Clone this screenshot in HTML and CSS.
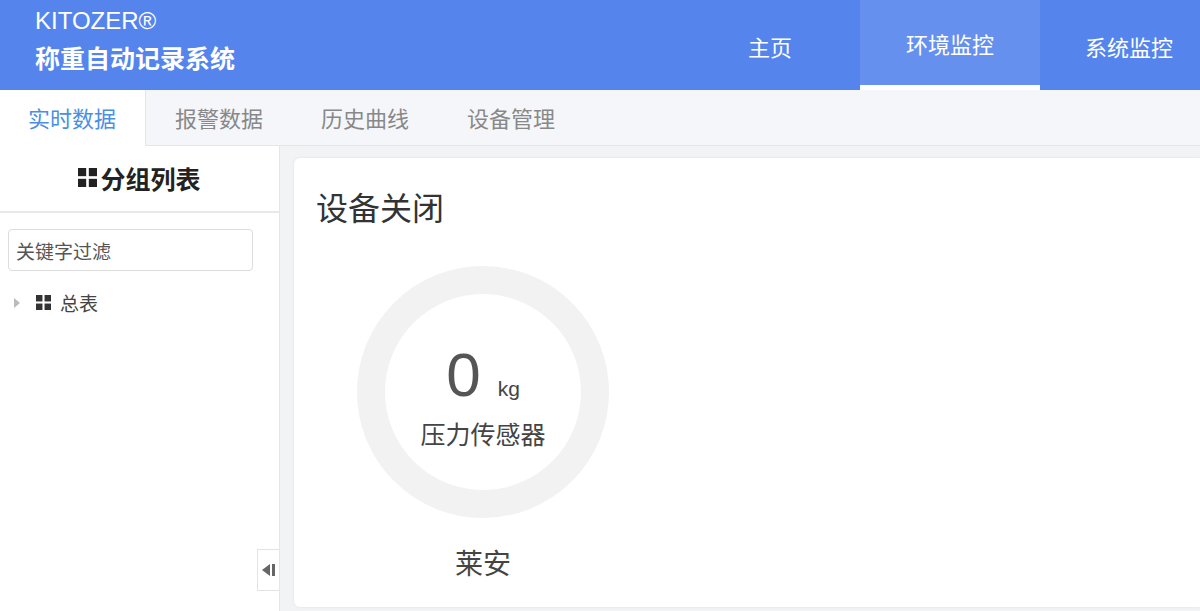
FILE: index.html
```html
<!DOCTYPE html>
<html lang="zh-CN">
<head>
    <meta charset="UTF-8">
    <title>称重自动记录系统</title>
    <link rel="stylesheet" href="styles.css">
</head>
<body>
    <header class="top-bar">
        <div class="brand">
            <div class="brand-name">KITOZER®</div>
            <div class="brand-title">称重自动记录系统</div>
        </div>
        <nav class="main-nav">
            <a class="nav-item">主页</a>
            <a class="nav-item active">环境监控</a>
            <a class="nav-item">系统监控</a>
        </nav>
    </header>

    <div class="tab-bar">
        <a class="tab active">实时数据</a>
        <a class="tab">报警数据</a>
        <a class="tab">历史曲线</a>
        <a class="tab">设备管理</a>
    </div>

    <div class="content">
        <aside class="sidebar">
            <div class="sidebar-title">
                <svg class="grid-icon big" viewBox="0 0 10 10"><rect x="0" y="0" width="4.3" height="4.3"/><rect x="5.7" y="0" width="4.3" height="4.3"/><rect x="0" y="5.7" width="4.3" height="4.3"/><rect x="5.7" y="5.7" width="4.3" height="4.3"/></svg>分组列表
            </div>
            <div class="filter">
                <input type="text" placeholder="关键字过滤">
            </div>
            <ul class="tree">
                <li>
                    <span class="caret"></span>
                    <svg class="grid-icon" viewBox="0 0 10 10"><rect x="0" y="0" width="4.3" height="4.3"/><rect x="5.7" y="0" width="4.3" height="4.3"/><rect x="0" y="5.7" width="4.3" height="4.3"/><rect x="5.7" y="5.7" width="4.3" height="4.3"/></svg>
                    <span>总表</span>
                </li>
            </ul>
            <button class="collapse-btn">
                <svg viewBox="0 0 13 12"><polygon points="0,6 8,0 8,12" /><rect x="10" y="0" width="3" height="12"/></svg>
            </button>
        </aside>

        <main class="main">
            <div class="card">
                <h2 class="card-title">设备关闭</h2>
                <div class="gauge-wrap">
                    <div class="gauge">
                        <div class="gauge-value">0<span class="unit">kg</span></div>
                        <div class="gauge-label">压力传感器</div>
                    </div>
                    <div class="gauge-name">莱安</div>
                </div>
            </div>
        </main>
    </div>
</body>
</html>
```
FILE: styles.css
```css
body {
    margin: 0;
    font-family: "Noto Sans CJK SC", "Liberation Sans", sans-serif;
    background: #fff;
    height: 611px;
    overflow: hidden;
}
a {
    text-decoration: none;
    cursor: pointer;
}
.top-bar {
    height: 90px;
    background: #5585ec;
    display: flex;
    justify-content: space-between;
    color: white;
}
.brand {
    padding: 7px 0 0 35px;
}
.brand-name {
    font-family: "Liberation Sans", sans-serif;
    font-size: 24px;
    line-height: 28px;
}
.brand-title {
    font-size: 25px;
    font-weight: bold;
    line-height: 32px;
    margin-top: 6px;
}
.main-nav {
    display: flex;
}
.nav-item {
    width: 180px;
    color: white;
    font-size: 22px;
    line-height: 92px;
    text-align: center;
    box-sizing: border-box;
}
.nav-item:last-child {
    width: 160px;
    text-align: left;
    padding-left: 45px;
}
.nav-item.active {
    background: #6690ee;
    border-bottom: 5px solid #fff;
    line-height: 86px;
}
.tab-bar {
    height: 56px;
    background: #f5f6fa;
    border-bottom: 1px solid #e4e6ec;
    display: flex;
    box-sizing: border-box;
}
.tab {
    font-size: 22px;
    color: #888;
    line-height: 54px;
    padding: 0 29px 0 29px;
}
.tab.active {
    background: #fff;
    color: #4a90e2;
    width: 146px;
    box-sizing: border-box;
    padding: 0 0 0 28px;
    border-right: 1px solid #e4e6ec;
    height: 56px;
    margin-bottom: -1px;
}
.content {
    display: flex;
    height: 465px;
}
.sidebar {
    width: 279px;
    border-right: 1px solid #e6e6e6;
    position: relative;
    flex-shrink: 0;
}
.sidebar-title {
    height: 67px;
    border-bottom: 2px solid #e8e8e8;
    display: flex;
    align-items: center;
    justify-content: center;
    font-size: 25px;
    font-weight: bold;
    color: #222;
    box-sizing: border-box;
    padding-bottom: 2px;
}
.grid-icon {
    width: 15px;
    height: 15px;
    fill: #333;
    margin-right: 9px;
}
.grid-icon.big {
    width: 19px;
    height: 19px;
    fill: #222;
    margin-right: 3px;
}
.filter {
    padding: 16px 26px 0 8px;
}
.filter input {
    width: 100%;
    height: 42px;
    border: 1px solid #ddd;
    border-radius: 4px;
    box-sizing: border-box;
    padding: 0 7px;
    font-size: 19px;
    font-family: inherit;
}
.filter input::placeholder {
    color: #555;
}
.tree {
    list-style: none;
    margin: 0;
    padding: 18px 0 0 14px;
}
.tree li {
    display: flex;
    align-items: center;
    font-size: 19px;
    color: #444;
}
.caret {
    width: 0;
    height: 0;
    border-top: 5px solid transparent;
    border-bottom: 5px solid transparent;
    border-left: 6px solid #bbb;
    margin-right: 16px;
}
.collapse-btn {
    position: absolute;
    right: 0;
    bottom: 20px;
    width: 22px;
    height: 42px;
    border: 1px solid #e3e3e3;
    border-right: none;
    background: #fff;
    padding: 0 0 0 4px;
    display: flex;
    align-items: center;
}
.collapse-btn svg {
    width: 13px;
    height: 12px;
    fill: #666;
}
.main {
    flex: 1;
    background: #f2f3f5;
    padding: 12px 0 4px 14px;
}
.card {
    background: #fff;
    height: 100%;
    border-radius: 6px 0 0 6px;
    box-shadow: 0 0 3px rgba(0, 0, 0, 0.08);
    padding: 25px 0 0 22px;
    box-sizing: border-box;
}
.card-title {
    margin: 0;
    font-size: 32px;
    font-weight: normal;
    color: #333;
    line-height: 46px;
}
.gauge-wrap {
    width: 252px;
    margin: 37px 0 0 41px;
    text-align: center;
}
.gauge {
    width: 252px;
    height: 252px;
    border-radius: 50%;
    border: 28px solid #f2f2f2;
    box-sizing: border-box;
    display: flex;
    flex-direction: column;
    align-items: center;
    padding-top: 50px;
}
.gauge-value {
    font-family: "Liberation Sans", sans-serif;
    font-size: 62px;
    color: #555;
    line-height: 62px;
}
.unit {
    font-size: 21px;
    line-height: 1;
    margin-left: 17px;
    color: #444;
}
.gauge-label {
    font-size: 25px;
    line-height: 36px;
    color: #444;
    margin-top: 9px;
}
.gauge-name {
    font-size: 28px;
    color: #444;
    margin-top: 24px;
}
```
